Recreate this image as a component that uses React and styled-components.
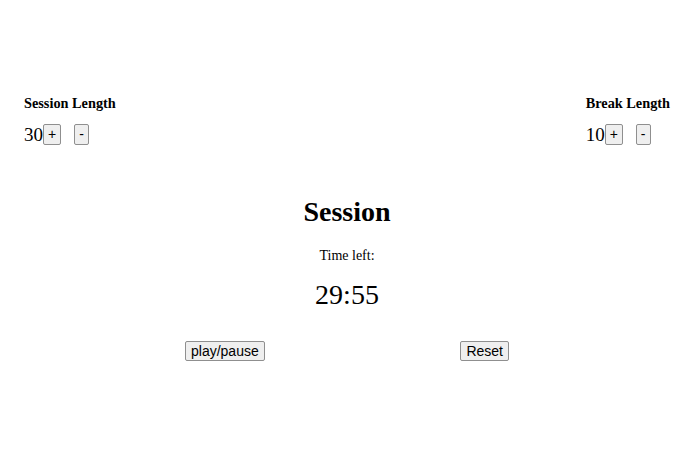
import React from "react";
import styled, { createGlobalStyle } from "styled-components";

const Global = createGlobalStyle`
  html, body { margin: 0; padding: 0; background: #ffffff; }
  body { font-family: "Liberation Serif", "Times New Roman", serif; color: #000; }
`;

const Page = styled.div`
  width: 700px;
  height: 466px;
  box-sizing: border-box;
  padding: 95px 30px 0 24px;
  display: flex;
  flex-direction: column;
`;

const Settings = styled.div`
  display: flex;
  justify-content: space-between;
`;

const Setting = styled.div`
  display: flex;
  flex-direction: column;
`;

const Label = styled.div`
  font-weight: bold;
  font-size: 14.3px;
  line-height: 16px;
  margin-bottom: 13px;
`;

const Row = styled.div`
  display: flex;
  align-items: center;
`;

const Value = styled.span`
  font-size: 19px;
  line-height: 20px;
`;

const SmallButton = styled.button`
  font-family: "Liberation Sans", Arial, sans-serif;
  font-size: 14px;
  line-height: 15px;
  height: 21px;
  padding: 1px 4px;
  margin-right: ${(p) => (p.$gap ? "13px" : "0")};
  border: 1px solid #8f8f8f;
  border-radius: 2px;
  background: #efefef;
  color: #000;
`;

const Center = styled.div`
  display: flex;
  flex-direction: column;
  align-items: center;
  margin-top: 51px;
`;

const Title = styled.h1`
  margin: 0;
  font-size: 28px;
  line-height: 32px;
  font-weight: bold;
`;

const TimeLabel = styled.div`
  font-size: 14px;
  line-height: 16px;
  margin-top: 20px;
`;

const Time = styled.div`
  font-size: 28px;
  line-height: 32px;
  margin-top: 15px;
`;

const Controls = styled.div`
  display: flex;
  justify-content: space-between;
  width: 324px;
  margin-top: 30px;
`;

const ControlButton = styled.button`
  font-family: "Liberation Sans", Arial, sans-serif;
  font-size: 14px;
  line-height: 16px;
  height: 20px;
  padding: 1px 5px;
  border: 1px solid #8f8f8f;
  border-radius: 2px;
  background: #efefef;
  color: #000;
`;

function LengthSetting({ label, value }) {
  return (
    <Setting>
      <Label>{label}</Label>
      <Row>
        <Value>{value}</Value>
        <SmallButton $gap>+</SmallButton>
        <SmallButton>-</SmallButton>
      </Row>
    </Setting>
  );
}

export default function App() {
  return (
    <>
      <Global />
      <Page>
        <Settings>
          <LengthSetting label="Session Length" value="30" />
          <LengthSetting label="Break Length" value="10" />
        </Settings>
        <Center>
          <Title>Session</Title>
          <TimeLabel>Time left:</TimeLabel>
          <Time>29:55</Time>
          <Controls>
            <ControlButton>play/pause</ControlButton>
            <ControlButton>Reset</ControlButton>
          </Controls>
        </Center>
      </Page>
    </>
  );
}
